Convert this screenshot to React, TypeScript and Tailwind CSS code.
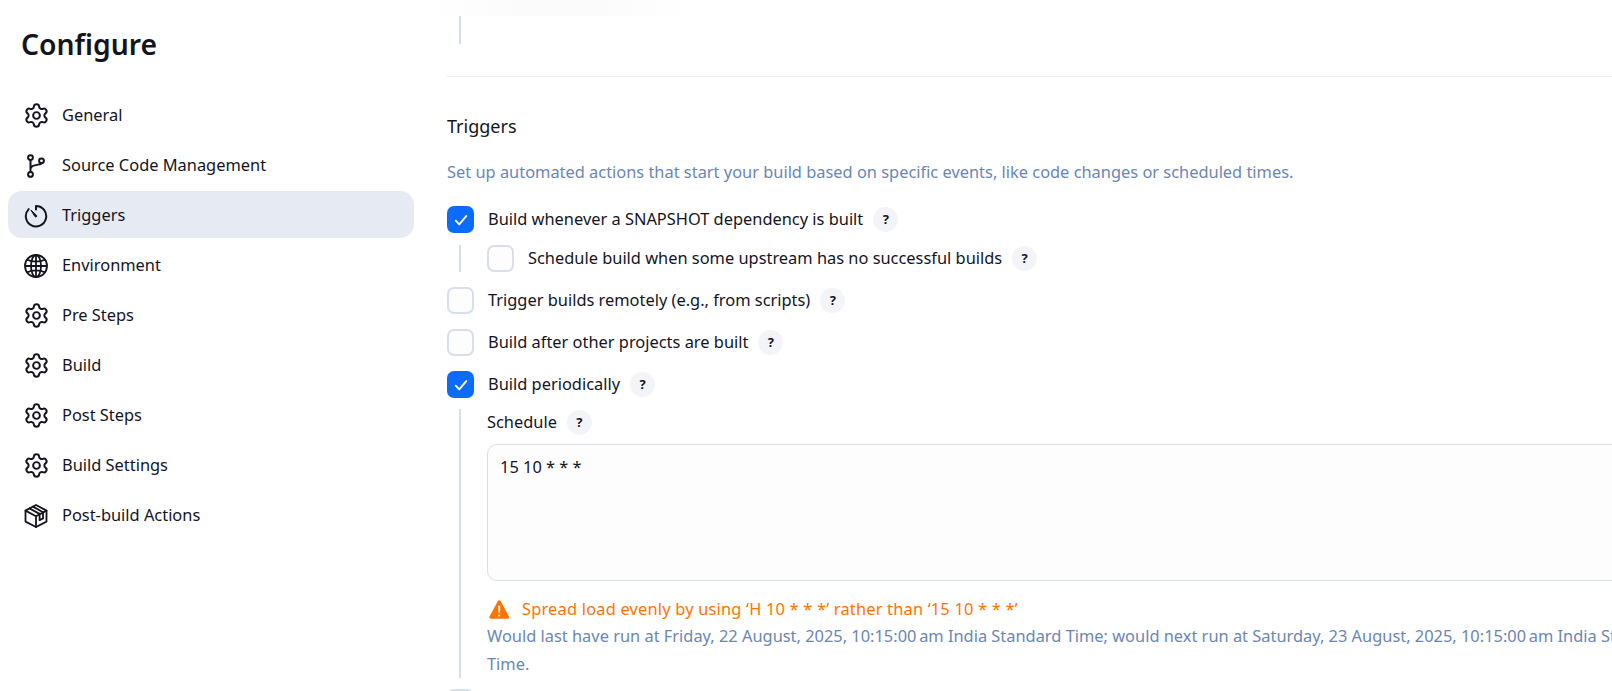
import { IoWarning } from "react-icons/io5";
import { Settings } from "lucide-react";
import type { ReactNode } from "react";

function GearIcon() {
  return <Settings size={27} strokeWidth={1.75} className="-mx-[1.5px]" />;
}

function BranchIcon() {
  return (
    <svg viewBox="0 0 24 24" className="h-6 w-6" fill="none" stroke="currentColor" strokeWidth="2" strokeLinecap="round">
      <circle cx="6.5" cy="3.6" r="2.4" />
      <circle cx="17.5" cy="6.8" r="2.4" />
      <circle cx="6.5" cy="20.4" r="2.4" />
      <path d="M6.5 6v12M6.5 15.5c0-2.5 1.5-3.4 4-4.1 3.5-1 7-1 7-2.2" />
    </svg>
  );
}

function TimerIcon() {
  return (
    <svg viewBox="0 0 24 24" className="h-6 w-6" fill="none" stroke="currentColor" strokeWidth="2" strokeLinecap="round">
      <path d="M12 2a10.2 10.2 0 1 1-7.3 3.1M12 2v3.6" />
      <path d="M7.2 6.3 12.6 11.4a1 1 0 0 1-1.4 1.4z" fill="currentColor" strokeWidth="1" strokeLinejoin="round" />
    </svg>
  );
}

function GlobeIcon() {
  return (
    <svg viewBox="0 0 24 24" className="h-6 w-6" fill="none" stroke="currentColor" strokeWidth="1.8">
      <circle cx="12" cy="12" r="11" />
      <ellipse cx="12" cy="12" rx="5" ry="11" />
      <path d="M12 1v22M1 12h22M3.2 5.8c5 2.4 12.6 2.4 17.6 0M3.2 18.2c5-2.4 12.6-2.4 17.6 0" />
    </svg>
  );
}

function PackageIcon() {
  return (
    <svg viewBox="0 0 24 24" className="h-6 w-6" fill="none" stroke="currentColor" strokeWidth="1.8" strokeLinejoin="round" strokeLinecap="round">
      <path d="M12 1 22.5 6.6v11L12 23 1.5 17.6v-11z" />
      <path d="M1.5 6.6 12 12.2 22.5 6.6M12 12.2V23" />
      <path d="M5.5 4.4 15.6 9.9v6.3l3.4-1.8V8.2L8.9 2.6" />
    </svg>
  );
}

const nav = [
  { label: "General", icon: <GearIcon /> },
  { label: "Source Code Management", icon: <BranchIcon /> },
  { label: "Triggers", icon: <TimerIcon />, active: true },
  { label: "Environment", icon: <GlobeIcon /> },
  { label: "Pre Steps", icon: <GearIcon /> },
  { label: "Build", icon: <GearIcon /> },
  { label: "Post Steps", icon: <GearIcon /> },
  { label: "Build Settings", icon: <GearIcon /> },
  { label: "Post-build Actions", icon: <PackageIcon /> },
];

function Help() {
  return (
    <span className="flex h-[25px] w-[25px] shrink-0 items-center justify-center rounded-full bg-[#f2f4f8] text-[13px] font-bold leading-none text-[#14141f]">
      ?
    </span>
  );
}

function Box() {
  return <span className="block h-[27px] w-[27px] shrink-0 rounded-[7px] border-2 border-[#d9deeb] bg-[#fdfdfe]" />;
}

function Check({ checked, label }: { checked?: boolean; label: ReactNode }) {
  return (
    <div className="flex h-[27px] items-center">
      {checked ? (
        <span className="flex h-[27px] w-[27px] shrink-0 items-center justify-center rounded-[7px] bg-[#0b6bfb]">
          <svg viewBox="0 0 16 16" className="h-[14px] w-[14px]" fill="none" stroke="white" strokeWidth="2.2" strokeLinecap="round" strokeLinejoin="round">
            <path d="M2 8.8 6 13 14 3.5" />
          </svg>
        </span>
      ) : (
        <Box />
      )}
      <span className="ml-[14px] whitespace-nowrap">{label}</span>
      <span className="ml-[10px]">
        <Help />
      </span>
    </div>
  );
}

export default function App() {
  return (
    <div className="flex h-[691px] w-[1612px] overflow-hidden bg-white font-['Noto_Sans',sans-serif] text-[16.4px] text-[#14141f]">
      <aside className="w-[447px] shrink-0 pl-2 pt-[24px]">
        <h1 className="ml-[13px] text-[28.3px] font-semibold leading-[40px]">Configure</h1>
        <nav className="mt-[27px] flex w-[406px] flex-col gap-[3px]">
          {nav.map((item) => (
            <div
              key={item.label}
              className={`flex h-[47px] items-center gap-[14px] rounded-[14px] px-4 pt-[2px] ${item.active ? "bg-[#e6eaf2]" : ""}`}
            >
              <span className="flex w-6 justify-center">{item.icon}</span>
              <span>{item.label}</span>
            </div>
          ))}
        </nav>
      </aside>

      <main className="w-[1250px] shrink-0">
        <div className="-ml-[20px] h-[16px] w-[270px] bg-gradient-to-r from-white via-[#fafafb] to-white" />
        <div className="ml-[12px] h-[28px] w-[2px] bg-[#d9deeb]" />
        <div className="mt-[32px] h-px bg-[#e9ecf3]" />
        <h2 className="mt-[36px] text-[18px] leading-[26px]">Triggers</h2>
        <p className="mt-[20px] leading-[26px] text-[#6a86b5]">
          Set up automated actions that start your build based on specific events, like code changes or scheduled times.
        </p>

        <div className="mt-[21px] flex flex-col">
          <Check checked label="Build whenever a SNAPSHOT dependency is built" />
          <div className="mt-[12px] flex">
            <div className="ml-[12px] w-[2px] bg-[#d9deeb]" />
            <div className="ml-[26px]">
              <Check label="Schedule build when some upstream has no successful builds" />
            </div>
          </div>
          <div className="mt-[15px]">
            <Check label="Trigger builds remotely (e.g., from scripts)" />
          </div>
          <div className="mt-[15px]">
            <Check label="Build after other projects are built" />
          </div>
          <div className="mt-[15px]">
            <Check checked label="Build periodically" />
          </div>
          <div className="mt-[11px] flex">
            <div className="ml-[12px] w-[2px] bg-[#d9deeb]" />
            <div className="ml-[26px] min-w-0 flex-1">
              <div className="flex h-[26px] items-center gap-[10px]">
                <span>Schedule</span>
                <Help />
              </div>
              <div className="mt-[9px] h-[137px] rounded-[10px] border border-[#d9deeb] bg-[#fdfdfe] px-[12px] py-[10px] leading-[24px]">
                15 10 * * *
              </div>
              <div className="mt-[16px] flex h-[25px] items-center gap-[10px] text-[#ff7300]">
                <IoWarning className="text-[25px]" />
                <span className="tracking-[0.2px]">Spread load evenly by using ‘H 10 * * *’ rather than ‘15 10 * * *’</span>
              </div>
              <p className="leading-[28px] text-[#6a86b5]">
                Would last have run at Friday, 22 August, 2025, 10:15:00{"\u202F"}am India Standard Time; would next run at Saturday, 23 August, 2025, 10:15:00{"\u202F"}am India Standard Time.
              </p>
            </div>
          </div>
          <div className="mt-[11px]">
            <Box />
          </div>
        </div>
      </main>
    </div>
  );
}
